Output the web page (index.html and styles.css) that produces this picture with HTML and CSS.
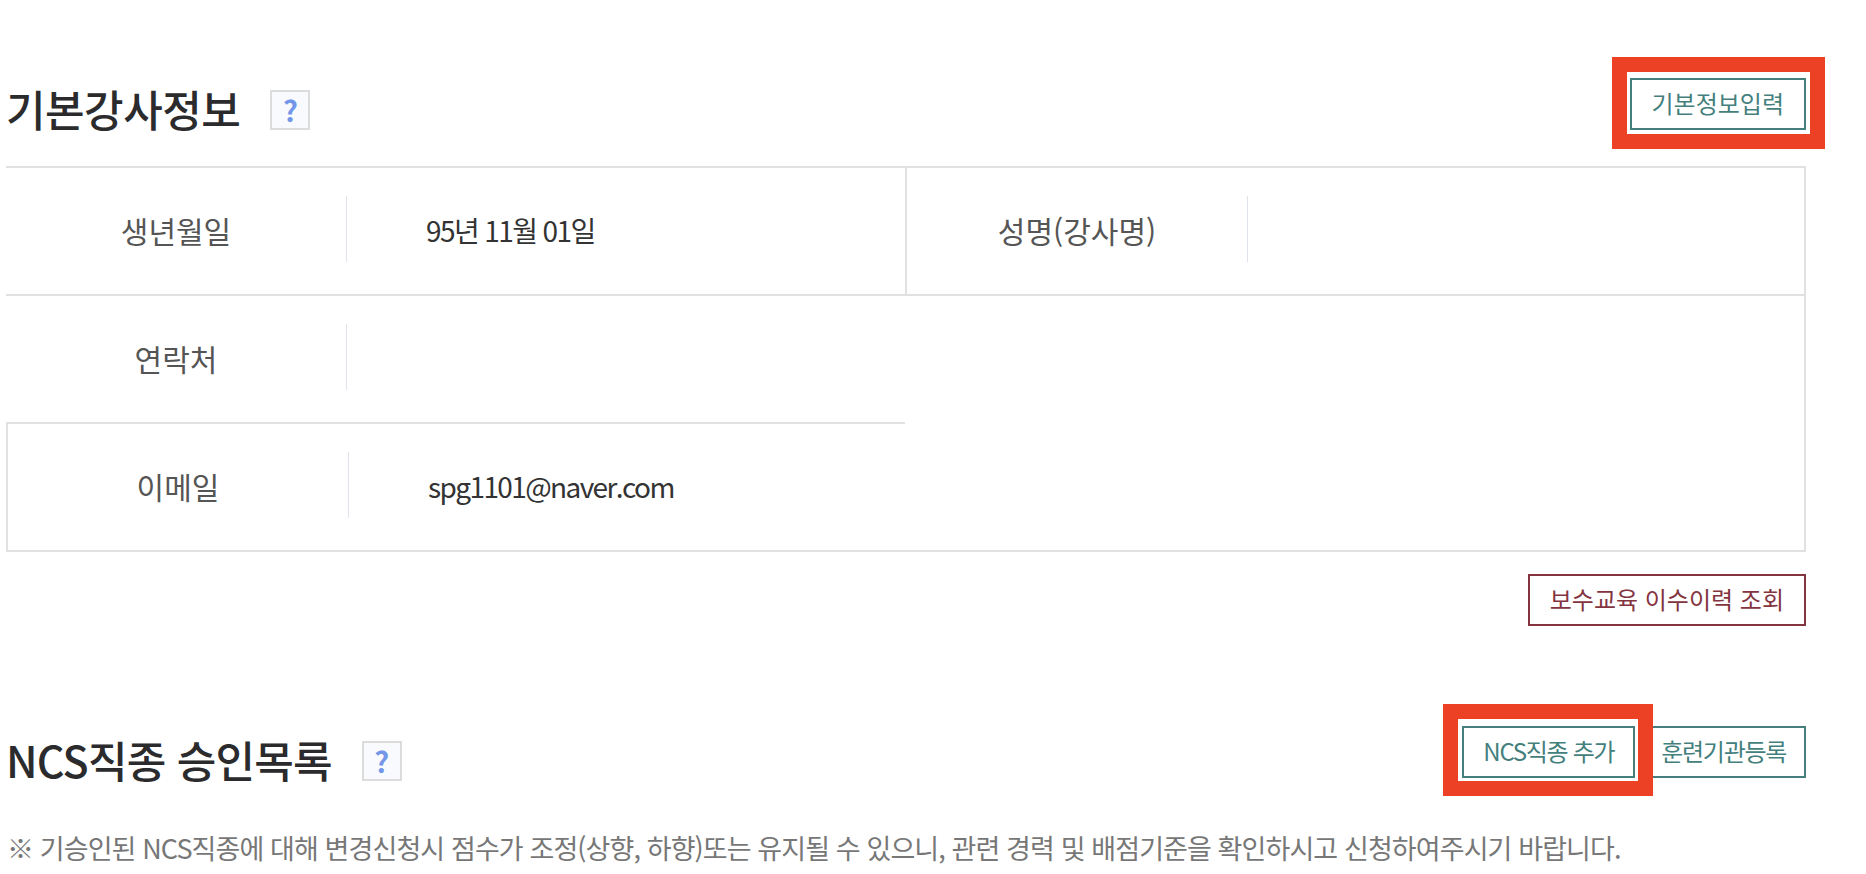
FILE: index.html
```html
<!DOCTYPE html>
<html lang="ko">
<head>
    <meta charset="UTF-8">
    <meta name="viewport" content="width=device-width, initial-scale=1.0">
    <title>기본강사정보</title>
    <link rel="stylesheet" href="styles.css">
</head>
<body>
    <div class="container">
        <div class="head head-first">
            <div class="title">
                <h2>기본강사정보</h2>
                <span class="help">?</span>
            </div>
            <div class="btns">
                <span class="marked marked-info">
                    <a class="btn" href="#">기본정보입력</a>
                </span>
            </div>
        </div>

        <div class="info">
            <div class="cell line">
                <div class="label">생년월일</div>
                <div class="value">95년 11월 01일</div>
            </div>
            <div class="cell line side">
                <div class="label">성명(강사명)</div>
                <div class="value"></div>
            </div>
            <div class="cell line">
                <div class="label">연락처</div>
                <div class="value"></div>
            </div>
            <div class="cell empty"></div>
            <div class="cell left">
                <div class="label">이메일</div>
                <div class="value">spg1101@naver.com</div>
            </div>
        </div>

        <div class="after-info">
            <a class="btn btn-red" href="#">보수교육 이수이력 조회</a>
        </div>

        <div class="head head-second">
            <div class="title title-second">
                <h2>NCS직종 승인목록</h2>
                <span class="help">?</span>
            </div>
            <div class="btns">
                <span class="marked marked-ncs">
                    <a class="btn btn-tight btn-ncs" href="#">NCS직종 추가</a>
                </span>
                <a class="btn btn-tight" href="#">훈련기관등록</a>
            </div>
        </div>

        <p class="note">※ 기승인된 NCS직종에 대해 변경신청시 점수가 조정(상향, 하향)또는 유지될 수 있으니, 관련 경력 및 배점기준을 확인하시고 신청하여주시기 바랍니다.</p>
    </div>
</body>
</html>
```

FILE: styles.css
```css
body {
    margin: 0;
    background-color: #fff;
    font-family: "Noto Sans CJK KR", "Noto Sans", sans-serif;
    color: #333;
}

.container {
    padding: 78px 60px 0 6px;
}

.head {
    display: flex;
    justify-content: space-between;
    align-items: flex-end;
    height: 52px;
}

.title {
    display: flex;
    align-items: flex-end;
}

.title-second {
    margin-bottom: -3px;
}

.title h2 {
    margin: 0 30px 0 0;
    font-size: 43px;
    font-weight: 500;
    line-height: 44px;
    letter-spacing: -0.5px;
    color: #2b2b2d;
}

.title-second h2 {
    letter-spacing: -0.8px;
}

.help {
    box-sizing: border-box;
    width: 40px;
    height: 40px;
    border: 2px solid #dcdcdc;
    background-color: #f8fafe;
    font-size: 29px;
    font-weight: 700;
    line-height: 35px;
    text-align: center;
    color: #7396e8;
}

.btns {
    display: flex;
    gap: 6px;
}

.btn {
    display: block;
    box-sizing: border-box;
    height: 52px;
    padding: 0 20px;
    border: 2px solid #447f7d;
    font-size: 24px;
    line-height: 46px;
    color: #447f7d;
    text-decoration: none;
    white-space: nowrap;
}

.btn-tight {
    padding: 0 18px;
    letter-spacing: -1.3px;
}

.btn-ncs {
    padding: 0 19px;
}

.btn-red {
    border-color: #84343f;
    color: #84343f;
}

/* 빨간 표시 박스 */
.marked {
    position: relative;
    display: block;
}

.marked::after {
    content: "";
    position: absolute;
    border: 15px solid #ec4124;
}

.marked-info::after {
    top: -21px;
    right: -19px;
    bottom: -19px;
    left: -18px;
}

.marked-ncs::after {
    top: -22px;
    right: -18px;
    bottom: -18px;
    left: -19px;
}

.info {
    display: grid;
    grid-template-columns: 899px 1fr;
    grid-template-rows: 128px 128px 126px;
    margin-top: 36px;
    border-top: 2px solid #e1e1e1;
    border-right: 2px solid #e1e1e1;
    border-bottom: 2px solid #e1e1e1;
}

.cell {
    display: flex;
    align-items: center;
    box-sizing: border-box;
    padding-bottom: 4px;
}

.line {
    border-bottom: 2px solid #e1e1e1;
}

.side,
.left {
    border-left: 2px solid #e1e1e1;
}

.label {
    flex: none;
    box-sizing: border-box;
    width: 341px;
    height: 66px;
    border-right: 1px solid #dfe3ec;
    font-size: 30px;
    line-height: 68px;
    text-align: center;
    color: #555;
}

.value {
    padding: 2px 0 0 79px;
    font-size: 28px;
    letter-spacing: -1.6px;
    color: #333;
}

.after-info {
    display: flex;
    justify-content: flex-end;
    margin-top: 22px;
}

.head-second {
    margin-top: 100px;
}

.note {
    margin: 52px 0 0 1px;
    font-size: 27px;
    line-height: 36px;
    letter-spacing: -0.9px;
    color: #777;
}
```
